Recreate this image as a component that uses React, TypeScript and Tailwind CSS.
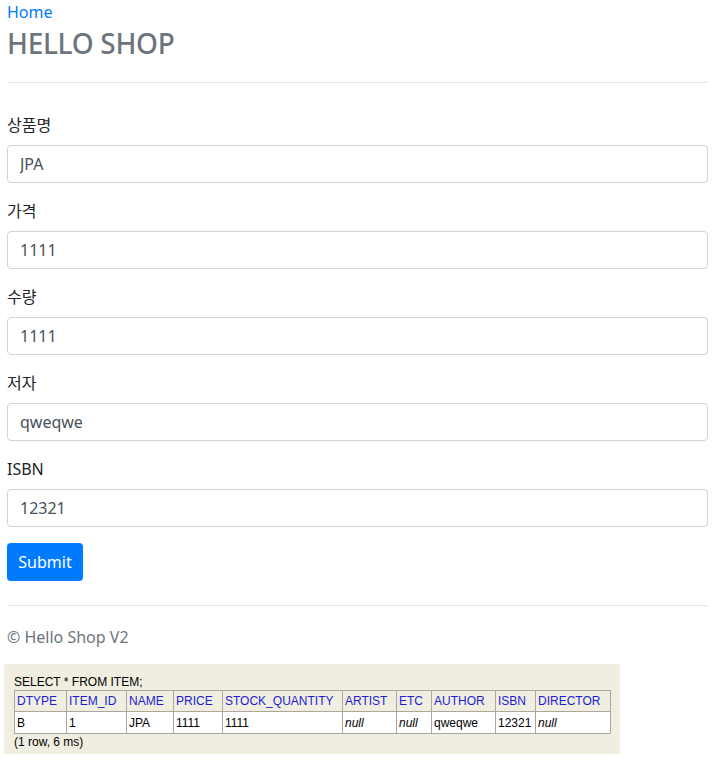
import React from "react";

const fields = [
  { label: "상품명", value: "JPA" },
  { label: "가격", value: "1111" },
  { label: "수량", value: "1111" },
  { label: "저자", value: "qweqwe" },
  { label: "ISBN", value: "12321" },
];

const columns = [
  { name: "DTYPE", w: "w-[52px]" },
  { name: "ITEM_ID", w: "w-[60px]" },
  { name: "NAME", w: "w-[47px]" },
  { name: "PRICE", w: "w-[49px]" },
  { name: "STOCK_QUANTITY", w: "w-[120px]" },
  { name: "ARTIST", w: "w-[54px]" },
  { name: "ETC", w: "w-[35px]" },
  { name: "AUTHOR", w: "w-[64px]" },
  { name: "ISBN", w: "w-[40px]" },
  { name: "DIRECTOR", w: "w-[75px]" },
];

const row: (string | null)[] = ["B", "1", "JPA", "1111", "1111", null, null, "qweqwe", "12321", null];

const App = () => {
  return (
    <div className="bg-white min-h-[767px] font-['Noto_Sans','Noto_Sans_CJK_KR',sans-serif] text-[#212529]">
      <div className="w-[701px] ml-[7px]">
        <a href="#" className="block h-6 leading-6 text-[16px] text-[#007bff]">
          Home
        </a>
        <h3 className="mt-[2px] h-[34px] leading-[34px] text-[28px] tracking-[-0.3px] font-medium text-[#6c757d] mb-[22px]">
          HELLO SHOP
        </h3>
        <hr className="border-t border-[#e5e5e5]" />

        <form className="pt-[30px]" onSubmit={(e) => e.preventDefault()}>
          {fields.map((f) => (
            <div key={f.label} className="mb-4">
              <label className="block h-6 leading-6 text-[16px] mb-2">{f.label}</label>
              <input
                type="text"
                defaultValue={f.value}
                className="block w-full h-[38px] px-3 border border-[#ced4da] rounded text-[16px] text-[#495057] focus:outline-none"
              />
            </div>
          ))}
          <button
            type="submit"
            className="h-[38px] w-[76px] bg-[#007bff] text-white text-[16px] rounded"
          >
            Submit
          </button>
        </form>

        <hr className="mt-6 border-t border-[#e5e5e5]" />
        <div className="mt-[19px] h-6 leading-6 text-[16px] text-[#6c757d]">© Hello Shop V2</div>
      </div>

      <div className="mt-[15px] ml-[4px] w-[616px] h-[90px] bg-[#f0eee0] pl-[10px] pt-[10px] font-['Liberation_Sans',Arial,sans-serif] text-[12px] text-black">
        <div className="h-[16px] leading-[16px]">SELECT * FROM ITEM;</div>
        <table className="table-fixed border-collapse w-[596px]">
          <thead>
            <tr className="h-[21px]">
              {columns.map((c) => (
                <th
                  key={c.name}
                  className={`${c.w} border border-[#aca899] px-[2px] text-left font-normal text-[#1c1cd8]`}
                >
                  {c.name}
                </th>
              ))}
            </tr>
          </thead>
          <tbody>
            <tr className="h-[22px] bg-white">
              {row.map((v, i) => (
                <td key={i} className="border border-[#aca899] px-[2px]">
                  {v === null ? <i>null</i> : v}
                </td>
              ))}
            </tr>
          </tbody>
        </table>
        <div className="h-[16px] leading-[16px]">(1 row, 6 ms)</div>
      </div>
    </div>
  );
};

export default App;
